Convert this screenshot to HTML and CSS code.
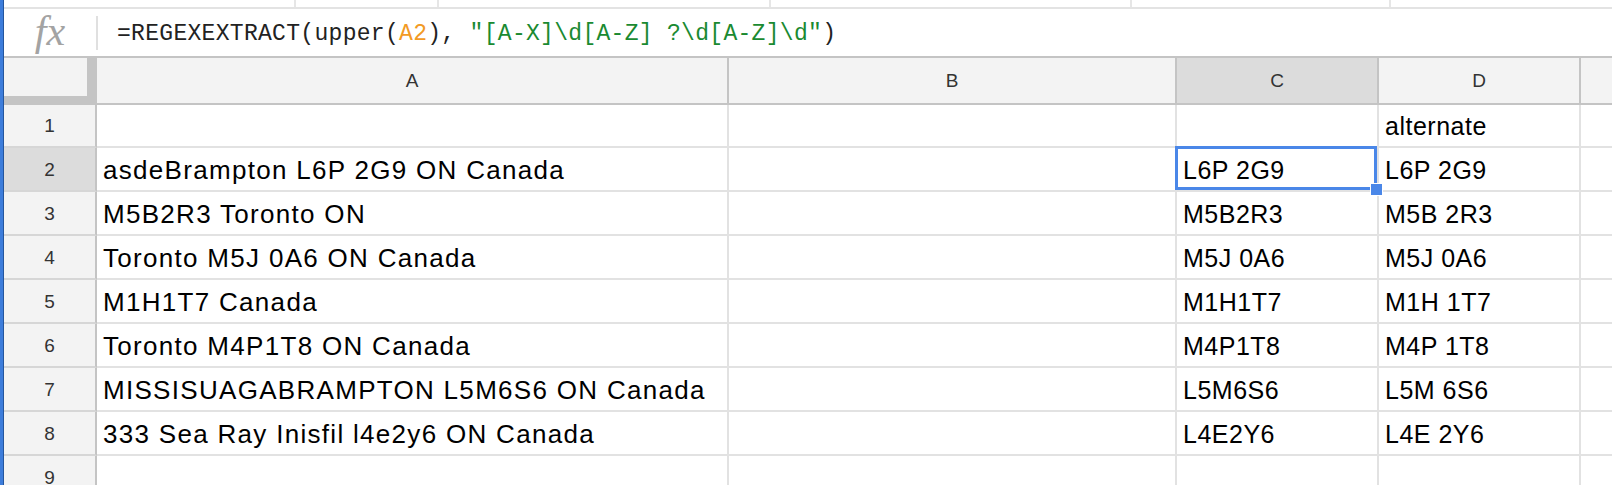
FILE: index.html
```html
<!DOCTYPE html>
<html>
<head>
<meta charset="utf-8">
<link rel="stylesheet" href="styles.css">
</head>
<body>
<div class="app">
  <div class="stripe"></div>
  <div class="main">
    <div class="topstrip">
      <div class="ts ts1"></div>
      <div class="ts ts2"></div>
      <div class="ts ts3"></div>
      <div class="ts ts4"></div>
      <div class="ts ts5"></div>
      <div class="ts ts6"></div>
    </div>
    <div class="formula-bar">
      <div class="fx">fx</div>
      <div class="fsep"></div>
      <div class="ftext">=REGEXEXTRACT(upper(<span class="ref">A2</span>), <span class="str">"[A-X]\d[A-Z] ?\d[A-Z]\d"</span>)</div>
    </div>
    <div class="grid">
      <div class="corner"></div>
      <div class="ch">A</div>
      <div class="ch">B</div>
      <div class="ch sel">C</div>
      <div class="ch">D</div>
      <div class="ch"></div>

      <div class="rh">1</div>
      <div class="c wide"></div><div class="c"></div><div class="c"></div><div class="c">alternate</div><div class="c"></div>

      <div class="rh sel">2</div>
      <div class="c wide">asdeBrampton L6P 2G9 ON Canada</div><div class="c"></div>
      <div class="c active">L6P 2G9<div class="selbox"></div><div class="handle"></div></div>
      <div class="c">L6P 2G9</div><div class="c"></div>

      <div class="rh">3</div>
      <div class="c wide">M5B2R3 Toronto ON</div><div class="c"></div><div class="c">M5B2R3</div><div class="c">M5B 2R3</div><div class="c"></div>

      <div class="rh">4</div>
      <div class="c wide">Toronto M5J 0A6 ON Canada</div><div class="c"></div><div class="c">M5J 0A6</div><div class="c">M5J 0A6</div><div class="c"></div>

      <div class="rh">5</div>
      <div class="c wide">M1H1T7 Canada</div><div class="c"></div><div class="c">M1H1T7</div><div class="c">M1H 1T7</div><div class="c"></div>

      <div class="rh">6</div>
      <div class="c wide">Toronto M4P1T8 ON Canada</div><div class="c"></div><div class="c">M4P1T8</div><div class="c">M4P 1T8</div><div class="c"></div>

      <div class="rh">7</div>
      <div class="c wide">MISSISUAGABRAMPTON L5M6S6 ON Canada</div><div class="c"></div><div class="c">L5M6S6</div><div class="c">L5M 6S6</div><div class="c"></div>

      <div class="rh">8</div>
      <div class="c wide">333 Sea Ray Inisfil l4e2y6 ON Canada</div><div class="c"></div><div class="c">L4E2Y6</div><div class="c">L4E 2Y6</div><div class="c"></div>

      <div class="rh">9</div>
      <div class="c wide"></div><div class="c"></div><div class="c"></div><div class="c"></div><div class="c"></div>
    </div>
  </div>
</div>
</body>
</html>
```
FILE: styles.css
```css
html, body {
  margin: 0;
  padding: 0;
  background: #fff;
}
body {
  width: 1612px;
  height: 485px;
  overflow: hidden;
  font-family: "Liberation Sans", Arial, sans-serif;
}
.app {
  display: flex;
  height: 485px;
}
.stripe {
  width: 3px;
  background: #3d7ddb;
  border-right: 1px solid #24569e;
  flex: none;
}
.main {
  flex: 1;
  min-width: 0;
  overflow: hidden;
}
.topstrip {
  height: 7px;
  display: flex;
  border-bottom: 2px solid #e3e3e3;
}
.ts {
  border-right: 2px solid #e6e6e6;
  flex: none;
}
.ts1 { width: 290px; }
.ts2 { width: 141px; }
.ts3 { width: 330px; }
.ts4 { width: 359px; }
.ts5 { width: 257px; }
.ts6 { flex: 1; border-right: none; }

.formula-bar {
  height: 47px;
  display: flex;
  align-items: center;
}
.fx {
  width: 92px;
  text-align: center;
  font-family: "Liberation Serif", "Times New Roman", serif;
  font-style: italic;
  font-size: 42px;
  color: #a3a3a3;
  line-height: 47px;
  flex: none;
  padding-bottom: 2px;
  box-sizing: border-box;
}
.fsep {
  width: 2px;
  height: 34px;
  background: #e0e0e0;
  flex: none;
}
.ftext {
  padding-left: 19px;
  font-family: "Liberation Mono", "Courier New", monospace;
  font-size: 23px;
  letter-spacing: 0.3px;
  color: #222;
  white-space: pre;
  padding-top: 2px;
}
.ref { color: #f29a24; }
.str { color: #1a8a31; }

.grid {
  display: grid;
  grid-template-columns: 93px 632px 448px 202px 202px 200px;
  grid-template-rows: 49px 43px repeat(8, 44px);
}
.corner {
  background: #f3f3f3;
  border-top: 2px solid #c4c4c4;
  border-right: 10px solid #c4c4c4;
  border-bottom: 9px solid #c4c4c4;
}
.ch {
  background: #f3f3f3;
  border-top: 2px solid #c4c4c4;
  border-bottom: 2px solid #c4c4c4;
  border-right: 2px solid #c4c4c4;
  display: flex;
  align-items: center;
  justify-content: center;
  font-size: 19px;
  color: #333;
}
.ch.sel, .rh.sel {
  background: #dcdcdc;
}
.rh {
  background: #f3f3f3;
  border-right: 2px solid #c4c4c4;
  border-bottom: 2px solid #d6d6d6;
  display: flex;
  align-items: center;
  justify-content: center;
  font-size: 19px;
  color: #333;
  padding-top: 1px;
}
.c {
  position: relative;
  border-right: 2px solid #e2e2e2;
  border-bottom: 2px solid #e2e2e2;
  display: flex;
  align-items: flex-end;
  padding: 0 0 5px 6px;
  font-size: 25px;
  letter-spacing: 0.5px;
  color: #000;
  white-space: nowrap;
  overflow: visible;
}
.c.wide {
  font-size: 26px;
  letter-spacing: 1.3px;
  padding-bottom: 4px;
}
.selbox {
  position: absolute;
  z-index: 2;
  left: -2px;
  top: -2px;
  right: 0;
  bottom: 0;
  border: 3px solid #4a87e8;
  pointer-events: none;
}
.handle {
  position: absolute;
  z-index: 3;
  left: 193px;
  top: 35px;
  width: 11px;
  height: 11px;
  background: #4a87e8;
  border: 1px solid #fff;
}
```
